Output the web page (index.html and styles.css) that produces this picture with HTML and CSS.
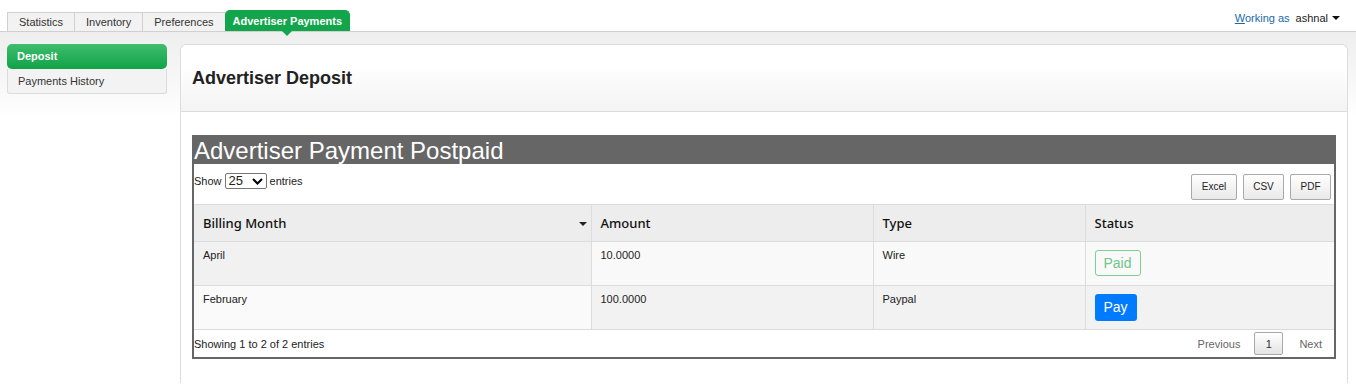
FILE: index.html
```html
<!DOCTYPE html>
<html>
<head>
<meta charset="utf-8">
<link rel="stylesheet" href="styles.css">
</head>
<body>
<div class="topbar">
  <ul class="tabs">
    <li class="tab">Statistics</li>
    <li class="tab">Inventory</li>
    <li class="tab">Preferences</li>
    <li class="tab active">Advertiser Payments</li>
  </ul>
  <div class="user"><span class="link"><u>W</u>orking as</span><span class="name">ashnal</span><span class="caret"></span></div>
</div>
<div class="page">
  <div class="sidebar">
    <div class="side-item active">Deposit</div>
    <div class="side-item">Payments History</div>
  </div>
  <div class="panel">
    <div class="panel-head"><h1>Advertiser Deposit</h1></div>
    <div class="panel-body">
      <div class="tbox">
        <div class="tbox-title">Advertiser Payment Postpaid</div>
        <div class="controls">
          <div class="length">Show <span class="select">25<svg width="11" height="7" viewBox="0 0 11 7"><path d="M1 1l4.5 4.5L10 1" fill="none" stroke="#000" stroke-width="2"/></svg></span> entries</div>
          <div class="exports">
            <span class="btn btn-wide">Excel</span>
            <span class="btn">CSV</span>
            <span class="btn">PDF</span>
          </div>
        </div>
        <table class="grid">
          <thead>
            <tr>
              <th class="c1">Billing Month<span class="sort"></span></th>
              <th class="c2">Amount</th>
              <th class="c3">Type</th>
              <th class="c4">Status</th>
            </tr>
          </thead>
          <tbody>
            <tr class="odd">
              <td class="sorted">April</td>
              <td>10.0000</td>
              <td>Wire</td>
              <td><span class="paid">Paid</span></td>
            </tr>
            <tr class="even">
              <td class="sorted">February</td>
              <td>100.0000</td>
              <td>Paypal</td>
              <td><span class="pay">Pay</span></td>
            </tr>
          </tbody>
        </table>
        <div class="footer">
          <div class="info">Showing 1 to 2 of 2 entries</div>
          <div class="paging">
            <span class="pg">Previous</span>
            <span class="pg current">1</span>
            <span class="pg">Next</span>
          </div>
        </div>
      </div>
    </div>
  </div>
</div>
</body>
</html>
```

FILE: styles.css
```css
html, body {
  margin: 0;
  padding: 0;
}
body {
  font-family: "Liberation Sans", Arial, sans-serif;
  font-size: 11px;
  color: #222;
  background: linear-gradient(#eeeeee 32px, #ffffff 120px);
  height: 384px;
  overflow: hidden;
}
.topbar {
  height: 31px;
  border-bottom: 1px solid #d0d0d0;
  background: #fff;
  display: flex;
  justify-content: space-between;
  align-items: flex-end;
}
.tabs {
  list-style: none;
  margin: 0 0 0 7px;
  padding: 0;
  display: flex;
  align-items: flex-end;
  height: 31px;
  position: relative;
}
.tab {
  height: 18px;
  line-height: 18px;
  padding: 0 11px;
  font-size: 11px;
  color: #333;
  background: #f2f2f2;
  border: 1px solid #d0d0d0;
  border-bottom: none;
  margin-left: -1px;
}
.tab:first-child { margin-left: 0; }
.tab.active {
  height: 20px;
  line-height: 20px;
  background: #13a54b;
  border-color: #13a54b;
  color: #fff;
  font-weight: bold;
  border-radius: 5px 5px 0 0;
  position: relative;
  padding: 0 7px;
}
.tab.active::after {
  content: "";
  position: absolute;
  left: 50%;
  bottom: -5px;
  margin-left: -5px;
  border-left: 5px solid transparent;
  border-right: 5px solid transparent;
  border-top: 5px solid #13a54b;
}
.user {
  margin: 0 16px 7px 0;
  font-size: 11px;
  display: flex;
  align-items: center;
}
.user .link { color: #1a6aa8; }
.user .name { color: #222; margin-left: 6px; }
.caret {
  display: inline-block;
  margin-left: 4px;
  border-left: 4px solid transparent;
  border-right: 4px solid transparent;
  border-top: 4px solid #111;
}
.page {
  display: flex;
  gap: 13px;
  padding: 12px 8px 0 7px;
}
.sidebar {
  width: 160px;
  flex: none;
}
.side-item {
  height: 25px;
  line-height: 25px;
  padding-left: 10px;
  font-size: 11px;
  color: #333;
  background: #f3f3f3;
  border: 1px solid #dcdcdc;
  border-top: none;
  border-radius: 0 0 3px 3px;
  box-sizing: border-box;
}
.side-item.active {
  height: 25px;
  line-height: 24px;
  color: #fff;
  font-weight: bold;
  background: linear-gradient(#3fbd6e, #10a347);
  border: none;
  border-radius: 5px;
}
.panel {
  flex: 1;
  background: #fff;
  border: 1px solid #dcdcdc;
  border-bottom: none;
  border-radius: 6px 6px 0 0;
  height: 339px;
  box-sizing: border-box;
}
.panel-head {
  height: 66px;
  border-bottom: 1px solid #dcdcdc;
  background: linear-gradient(#ffffff 30%, #f3f3f3);
  border-radius: 6px 6px 0 0;
  display: flex;
  align-items: center;
  padding-left: 11px;
}
.panel-head h1 {
  margin: 0;
  font-size: 18px;
  font-weight: bold;
  color: #222;
}
.panel-body {
  padding: 23px 11px 0 11px;
}
.tbox {
  border: 2px solid #666;
  border-top: none;
  background: #fff;
}
.tbox-title {
  background: #666;
  color: #fff;
  font-size: 24px;
  height: 29px;
  line-height: 31px;
  margin: 0 -2px;
  padding-left: 2px;
}
.controls {
  height: 40px;
  display: flex;
  justify-content: space-between;
}
.length {
  padding-top: 9px;
  display: flex;
  align-items: flex-start;
  gap: 3px;
  font-size: 11px;
  line-height: 16px;
}
.select {
  display: inline-flex;
  align-items: center;
  justify-content: space-between;
  width: 42px;
  height: 16px;
  box-sizing: border-box;
  border: 1px solid #767676;
  border-radius: 2px;
  padding: 0 3px 0 3px;
  font-size: 13px;
}
.exports {
  display: flex;
  gap: 6px;
  padding: 10px 3px 0 0;
}
.btn {
  width: 41px;
  height: 26px;
  line-height: 24px;
  box-sizing: border-box;
  text-align: center;
  font-size: 10px;
  color: #222;
  border: 1px solid #a9a9a9;
  border-radius: 2px;
  background: linear-gradient(#ffffff, #e9e9e9);
}
.btn-wide { width: 46px; }
.grid {
  width: 100%;
  border-collapse: collapse;
  table-layout: fixed;
}
.grid th {
  height: 37px;
  box-sizing: border-box;
  background: #ededed;
  text-align: left;
  font-family: "Noto Sans", "DejaVu Sans", sans-serif;
  font-weight: 500;
  font-size: 13px;
  color: #111;
  padding: 0 9px;
  border: 1px solid #dcdcdc;
  position: relative;
}
.grid th:first-child, .grid td:first-child { border-left: none; }
.grid th:last-child, .grid td:last-child { border-right: none; }
.c1 { width: 397px; }
.c2 { width: 282px; }
.c3 { width: 212px; }
.sort {
  position: absolute;
  right: 4px;
  top: 17px;
  border-left: 4px solid transparent;
  border-right: 4px solid transparent;
  border-top: 4px solid #222;
}
.grid td {
  height: 44px;
  box-sizing: border-box;
  vertical-align: top;
  padding: 7px 9px 0 9px;
  font-size: 11px;
  color: #222;
  border: 1px solid #dcdcdc;
  border-top: none;
}
.odd td { background: #f9f9f9; }
.odd td.sorted { background: #f1f1f1; }
.even td { background: #f2f2f2; }
.even td.sorted { background: #fafafa; }
.paid, .pay {
  display: inline-block;
  font-size: 14px;
  border-radius: 3px;
  box-sizing: border-box;
}
.paid {
  width: 46px;
  height: 26px;
  line-height: 24px;
  text-align: center;
  color: #6fc686;
  border: 1px solid #7ed092;
  margin-top: 1px;
}
.pay {
  width: 42px;
  height: 27px;
  line-height: 27px;
  text-align: center;
  color: #fff;
  background: #007bff;
  margin-top: 1px;
}
.footer {
  height: 27px;
  display: flex;
  justify-content: space-between;
  align-items: center;
}
.info { font-size: 11px; }
.paging {
  display: flex;
  align-items: center;
  padding-right: 6px;
}
.pg {
  font-size: 11px;
  color: #666;
  padding: 0 6px;
}
.pg.current {
  height: 23px;
  line-height: 22px;
  box-sizing: border-box;
  width: 29px;
  text-align: center;
  padding: 0;
  margin: 0 10px 0 8px;
  border: 1px solid #a9a9a9;
  border-radius: 2px;
  background: linear-gradient(#ffffff, #e4e4e4);
  color: #333;
}
```
